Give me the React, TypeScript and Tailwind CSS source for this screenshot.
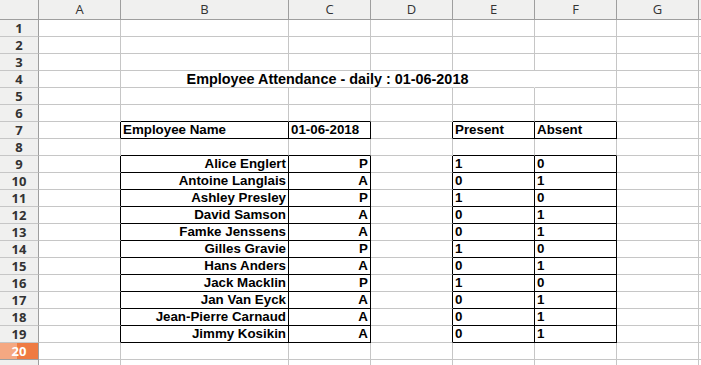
import React from 'react';

const people: [string, 'P' | 'A'][] = [
  ['Alice Englert', 'P'],
  ['Antoine Langlais', 'A'],
  ['Ashley Presley', 'P'],
  ['David Samson', 'A'],
  ['Famke Jenssens', 'A'],
  ['Gilles Gravie', 'P'],
  ['Hans Anders', 'A'],
  ['Jack Macklin', 'P'],
  ['Jan Van Eyck', 'A'],
  ['Jean-Pierre Carnaud', 'A'],
  ['Jimmy Kosikin', 'A'],
];

const letters = ['A', 'B', 'C', 'D', 'E', 'F', 'G', ''];
const rows = Array.from({ length: 21 }, (_, i) => i + 1);

// table cells that carry a black outline: B,C,E,F on row 7 and rows 9-19
const boxed = (r: number, c: number) =>
  (r === 7 || (r >= 9 && r <= 19)) && (c === 2 || c === 3 || c === 5 || c === 6);

const cellText = (r: number, c: number) => {
  if (r === 7) return ['', '', 'Employee Name', '01-06-2018', '', 'Present', 'Absent'][c] || '';
  if (r >= 9 && r <= 19) {
    const [name, st] = people[r - 9];
    if (c === 2) return name;
    if (c === 3) return st;
    if (c === 5) return st === 'P' ? '1' : '0';
    if (c === 6) return st === 'P' ? '0' : '1';
  }
  return '';
};

const rightAligned = (r: number, c: number) => r >= 9 && (c === 2 || c === 3);

function Cell({ r, c }: { r: number; c: number }) {
  const right = boxed(r, c) || boxed(r, c + 1);
  const bottom = boxed(r, c) || boxed(r + 1, c);
  return (
    <div
      className={`h-[17px] border-r border-b px-[2px] leading-[16px] whitespace-nowrap overflow-hidden ${
        right ? 'border-r-black' : 'border-r-[#c6c6c6]'
      } ${bottom ? 'border-b-black' : 'border-b-[#c6c6c6]'} ${
        rightAligned(r, c) ? 'text-right' : 'text-left'
      }`}
    >
      {cellText(r, c)}
    </div>
  );
}

function RowHead({ r }: { r: number }) {
  if (r === 20) {
    return (
      <div className="h-[17px] border-r border-b border-r-[#9e9e9e] border-b-[#9e9e9e] bg-[linear-gradient(to_right,#f5a882_17px,#ef7b42_17px)] text-center text-white font-bold leading-[16px] font-['Open_Sans','DejaVu_Sans',sans-serif] text-[13px]">
        {r}
      </div>
    );
  }
  return (
    <div className="h-[17px] border-r border-b border-r-[#9e9e9e] border-b-[#c6c6c6] bg-[#f0f0ef] text-center text-[#333] leading-[16px] font-['Open_Sans','DejaVu_Sans',sans-serif] text-[13px]">
      {r < 21 ? r : ''}
    </div>
  );
}

export default function App() {
  return (
    <div className="h-[365px] w-[701px] overflow-hidden bg-white">
      <div className="grid grid-cols-[39px_82px_168px_82px_82px_82px_82px_82px_1fr] font-['Liberation_Sans',Arial,sans-serif] text-[13.33px] font-bold text-black">
        <div className="h-[20px] border-r border-b border-[#9e9e9e] bg-[#f0f0ef]" />
        {letters.map((l, i) => (
          <div
            key={i}
            className="h-[20px] border-r border-b border-[#9e9e9e] bg-[#f0f0ef] text-center leading-[19px] font-normal text-[#333] font-['Open_Sans','DejaVu_Sans',sans-serif] text-[13px]"
          >
            {l}
          </div>
        ))}
        {rows.map((r) => (
          <React.Fragment key={r}>
            <RowHead r={r} />
            {r === 4 ? (
              <>
                <Cell r={4} c={1} />
                <div className="col-span-4 h-[17px] border-b border-r border-b-[#c6c6c6] border-r-white text-center text-[14.4px] leading-[16px] whitespace-nowrap">
                  Employee Attendance - daily : 01-06-2018
                </div>
                <Cell r={4} c={6} />
                <Cell r={4} c={7} />
                <Cell r={4} c={8} />
              </>
            ) : (
              [1, 2, 3, 4, 5, 6, 7, 8].map((c) => <Cell key={c} r={r} c={c} />)
            )}
          </React.Fragment>
        ))}
      </div>
    </div>
  );
}
